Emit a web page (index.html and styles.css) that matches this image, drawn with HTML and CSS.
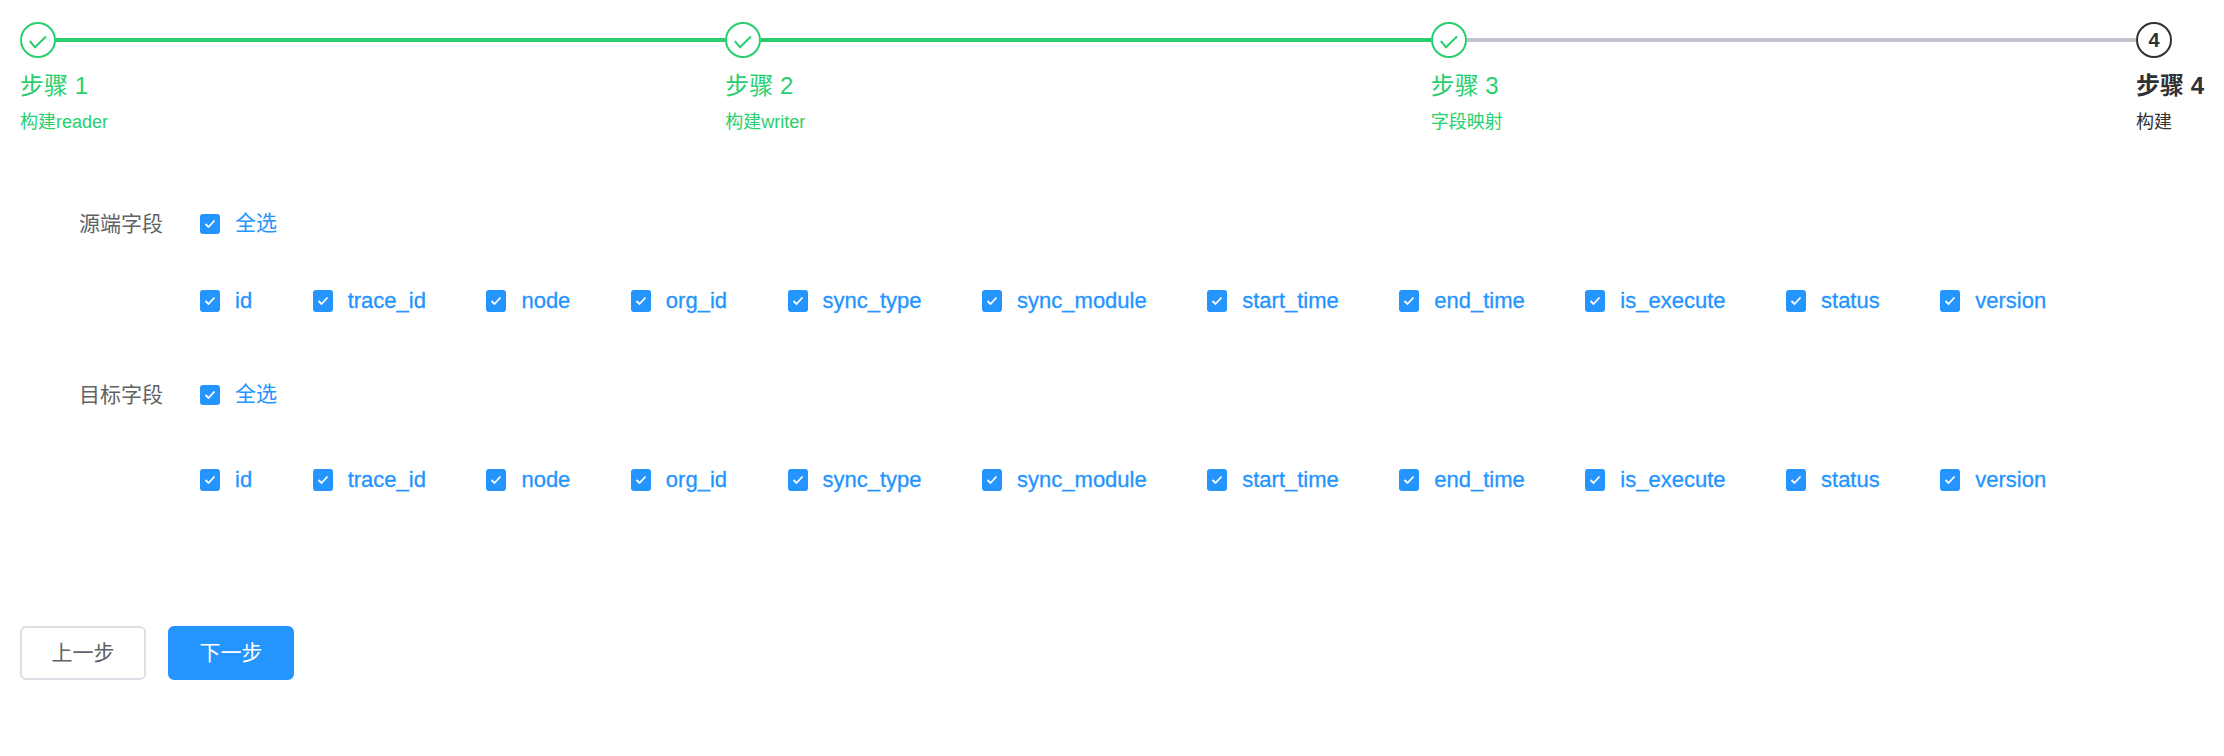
FILE: index.html
```html
<!DOCTYPE html>
<html lang="zh-CN">
<head>
<meta charset="utf-8">
<title>构建</title>
<link rel="stylesheet" href="styles.css">
</head>
<body>
<div class="page">
  <div class="steps">
    <div class="step done">
      <div class="head"><span class="dot"><svg class="tick" viewBox="0 0 18 14"><path d="M.8 6 6 12.3 17 1.5"/></svg></span><span class="line"></span></div>
      <div class="title">步骤 1</div><div class="desc">构建reader</div>
    </div>
    <div class="step done">
      <div class="head"><span class="dot"><svg class="tick" viewBox="0 0 18 14"><path d="M.8 6 6 12.3 17 1.5"/></svg></span><span class="line"></span></div>
      <div class="title">步骤 2</div><div class="desc">构建writer</div>
    </div>
    <div class="step done pending-line">
      <div class="head"><span class="dot"><svg class="tick" viewBox="0 0 18 14"><path d="M.8 6 6 12.3 17 1.5"/></svg></span><span class="line"></span></div>
      <div class="title">步骤 3</div><div class="desc">字段映射</div>
    </div>
    <div class="step current">
      <div class="head"><span class="dot">4</span></div>
      <div class="title">步骤 4</div><div class="desc">构建</div>
    </div>
  </div>

  <div class="form">
    <div class="group">
      <div class="row all-row">
        <div class="label">源端字段</div>
        <label class="check all"><span class="box"><svg viewBox="0 0 12 10"><path d="M1.5 5 4.5 8 10.5 1.5"/></svg></span><span class="all-text">全选</span></label>
      </div>
      <div class="row fields-row">
        <div class="label"></div>
        <div class="fields">
          <label class="check"><span class="box"><svg viewBox="0 0 12 10"><path d="M1.5 5 4.5 8 10.5 1.5"/></svg></span>id</label>
          <label class="check"><span class="box"><svg viewBox="0 0 12 10"><path d="M1.5 5 4.5 8 10.5 1.5"/></svg></span>trace_id</label>
          <label class="check"><span class="box"><svg viewBox="0 0 12 10"><path d="M1.5 5 4.5 8 10.5 1.5"/></svg></span>node</label>
          <label class="check"><span class="box"><svg viewBox="0 0 12 10"><path d="M1.5 5 4.5 8 10.5 1.5"/></svg></span>org_id</label>
          <label class="check"><span class="box"><svg viewBox="0 0 12 10"><path d="M1.5 5 4.5 8 10.5 1.5"/></svg></span>sync_type</label>
          <label class="check"><span class="box"><svg viewBox="0 0 12 10"><path d="M1.5 5 4.5 8 10.5 1.5"/></svg></span>sync_module</label>
          <label class="check"><span class="box"><svg viewBox="0 0 12 10"><path d="M1.5 5 4.5 8 10.5 1.5"/></svg></span>start_time</label>
          <label class="check"><span class="box"><svg viewBox="0 0 12 10"><path d="M1.5 5 4.5 8 10.5 1.5"/></svg></span>end_time</label>
          <label class="check"><span class="box"><svg viewBox="0 0 12 10"><path d="M1.5 5 4.5 8 10.5 1.5"/></svg></span>is_execute</label>
          <label class="check"><span class="box"><svg viewBox="0 0 12 10"><path d="M1.5 5 4.5 8 10.5 1.5"/></svg></span>status</label>
          <label class="check"><span class="box"><svg viewBox="0 0 12 10"><path d="M1.5 5 4.5 8 10.5 1.5"/></svg></span>version</label>
        </div>
      </div>
    </div>
    <div class="group">
      <div class="row all-row">
        <div class="label">目标字段</div>
        <label class="check all"><span class="box"><svg viewBox="0 0 12 10"><path d="M1.5 5 4.5 8 10.5 1.5"/></svg></span><span class="all-text">全选</span></label>
      </div>
      <div class="row fields-row">
        <div class="label"></div>
        <div class="fields">
          <label class="check"><span class="box"><svg viewBox="0 0 12 10"><path d="M1.5 5 4.5 8 10.5 1.5"/></svg></span>id</label>
          <label class="check"><span class="box"><svg viewBox="0 0 12 10"><path d="M1.5 5 4.5 8 10.5 1.5"/></svg></span>trace_id</label>
          <label class="check"><span class="box"><svg viewBox="0 0 12 10"><path d="M1.5 5 4.5 8 10.5 1.5"/></svg></span>node</label>
          <label class="check"><span class="box"><svg viewBox="0 0 12 10"><path d="M1.5 5 4.5 8 10.5 1.5"/></svg></span>org_id</label>
          <label class="check"><span class="box"><svg viewBox="0 0 12 10"><path d="M1.5 5 4.5 8 10.5 1.5"/></svg></span>sync_type</label>
          <label class="check"><span class="box"><svg viewBox="0 0 12 10"><path d="M1.5 5 4.5 8 10.5 1.5"/></svg></span>sync_module</label>
          <label class="check"><span class="box"><svg viewBox="0 0 12 10"><path d="M1.5 5 4.5 8 10.5 1.5"/></svg></span>start_time</label>
          <label class="check"><span class="box"><svg viewBox="0 0 12 10"><path d="M1.5 5 4.5 8 10.5 1.5"/></svg></span>end_time</label>
          <label class="check"><span class="box"><svg viewBox="0 0 12 10"><path d="M1.5 5 4.5 8 10.5 1.5"/></svg></span>is_execute</label>
          <label class="check"><span class="box"><svg viewBox="0 0 12 10"><path d="M1.5 5 4.5 8 10.5 1.5"/></svg></span>status</label>
          <label class="check"><span class="box"><svg viewBox="0 0 12 10"><path d="M1.5 5 4.5 8 10.5 1.5"/></svg></span>version</label>
        </div>
      </div>
    </div>
  </div>

  <div class="actions">
    <button class="btn">上一步</button>
    <button class="btn primary">下一步</button>
  </div>
</div>
</body>
</html>
```
FILE: styles.css
```css
* { box-sizing: border-box; }
html, body { margin: 0; padding: 0; background: #fff; }
body {
  font-family: "Liberation Sans", "Noto Sans CJK SC", sans-serif;
  color: #606266;
}
.page { padding: 22px 20px 0; }

.steps { display: flex; }
.step { flex: 1; min-width: 0; }
.step.current { flex: none; width: 68px; color: #303133; }
.head { display: flex; align-items: center; height: 36px; }
.dot {
  flex: none;
  width: 36px; height: 36px;
  border-radius: 50%;
  border: 2px solid currentColor;
  display: flex; align-items: center; justify-content: center;
  font-size: 20px; font-weight: 700;
}
.line { flex: 1; height: 4px; background: #29cf6e; }
.pending-line .line { background: #c0c4cc; }
.done { color: #29cf6e; }
.tick { width: 18px; height: 14px; margin-top: 3px; fill: none; stroke: currentColor; stroke-width: 2; }
.title { font-size: 24px; line-height: 32px; margin-top: 12px; }
.current .title { font-weight: 700; white-space: nowrap; }
.desc { font-size: 18px; line-height: 24px; margin-top: 8px; }

.form { margin-top: 68px; }
.group + .group { margin-top: 52px; }
.row { display: flex; align-items: center; }
.label {
  flex: none;
  width: 143px; padding-left: 59px; margin-right: 37px;
  font-size: 21px; white-space: nowrap; color: #606266;
}
.all-row { height: 40px; }
.fields-row { height: 40px; margin-top: 39px; }
.group + .group .fields-row { margin-top: 47px; }
.fields { display: flex; gap: 60.5px; }
.check {
  display: flex; align-items: center; gap: 15px;
  font-size: 22px; line-height: 26px; color: #2494ff; white-space: nowrap;
  -webkit-text-stroke: 0.3px currentColor;
}
.check.all { font-size: 21px; -webkit-text-stroke: 0; }
.all-text { padding-top: 2px; }
.box {
  flex: none; width: 20px; height: 22px;
  border-radius: 3px; background: #2494ff;
  display: flex; align-items: center; justify-content: center;
}
.all .box { height: 20px; margin-top: 4px; }
.box svg { width: 12px; height: 10px; fill: none; stroke: #fff; stroke-width: 1.8; }

.actions { display: flex; gap: 22px; margin-top: 126px; }
.btn {
  width: 126px; height: 54px;
  border: 2px solid #dcdfe6; border-radius: 6px;
  background: #fff; color: #606266;
  font: 21px "Liberation Sans", "Noto Sans CJK SC", sans-serif;
  padding: 0 0 4px;
}
.btn.primary { background: #2494ff; border-color: #2494ff; color: #fff; }
```
